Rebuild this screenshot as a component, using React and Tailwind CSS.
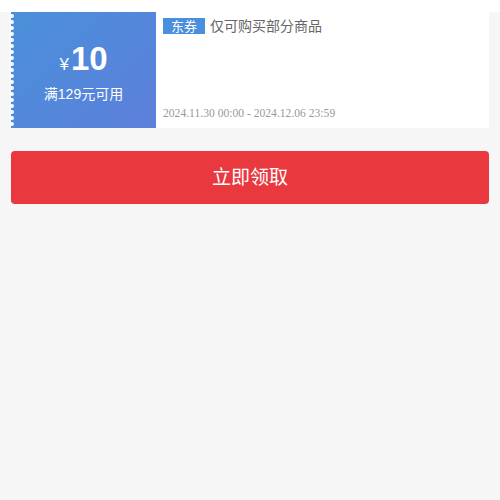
import React from "react";

const sans = "font-['Liberation_Sans','Noto_Sans_CJK_SC',sans-serif]";

function Scallop() {
  const dots = Array.from({ length: 19 });
  return (
    <div className="absolute left-[-2px] top-0 bottom-0 flex flex-col justify-between py-[2px]">
      {dots.map((_, i) => (
        <span key={i} className="block w-[5px] h-[4px] rounded-full bg-[#f6f8fc]" />
      ))}
    </div>
  );
}

function Coupon() {
  return (
    <div className="mx-[11px] mt-[12px] flex h-[116px] bg-white">
      <div className="relative w-[145px] shrink-0 flex flex-col items-center justify-center text-white bg-[linear-gradient(135deg,#4a90d9,#5d7fdc)]">
        <Scallop />
        <div className="flex items-baseline leading-none mt-[3px]">
          <span className="text-[17px] mr-[2px]">¥</span>
          <span className="text-[33px] font-bold">10</span>
        </div>
        <div className="mt-[12px] text-[14px] leading-none">满129元可用</div>
      </div>
      <div className="flex-1 flex flex-col justify-between pl-[7px] pt-[6px] pb-[8px]">
        <div className="flex items-center">
          <span className="inline-flex items-center justify-center w-[42px] h-[16px] bg-[#4a8fdb] text-white text-[13px] leading-none">
            东券
          </span>
          <span className="ml-[5px] text-[14px] leading-none text-[#666]">仅可购买部分商品</span>
        </div>
        <div className="text-[11.6px] leading-none text-[#999] font-['Liberation_Serif',serif]">
          2024.11.30 00:00 - 2024.12.06 23:59
        </div>
      </div>
    </div>
  );
}

export default function App() {
  return (
    <div className={`min-h-[500px] bg-[#f6f6f6] ${sans}`}>
      <Coupon />
      <div className="mx-[11px] mt-[23px] h-[53px] rounded-[4px] bg-[#e9393f] flex items-center justify-center text-white text-[19px] pt-[2px]">
        立即领取
      </div>
    </div>
  );
}
